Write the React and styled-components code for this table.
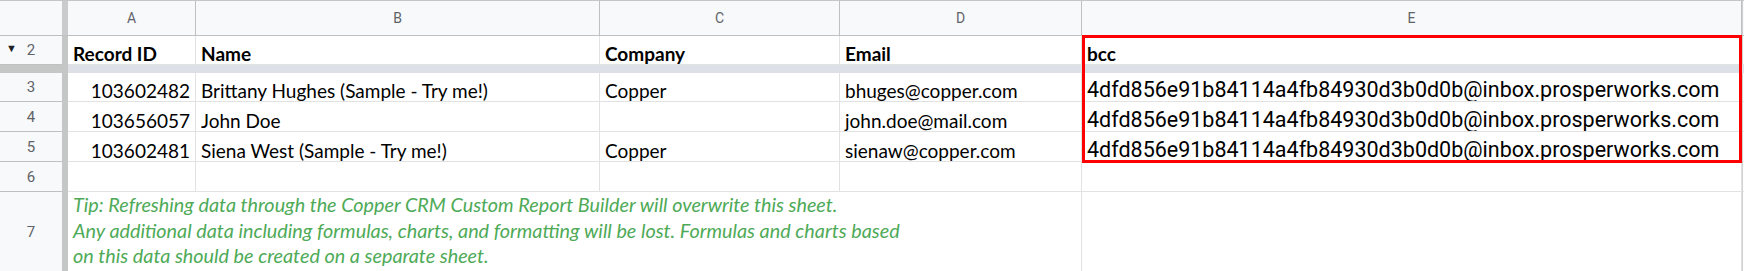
import styled, { createGlobalStyle } from "styled-components";

const COLUMNS = "62px 6px 128px 404px 240px 242px 660px 2px";

const columns = ["A", "B", "C", "D", "E"];

const records = [
  {
    row: 3,
    id: "103602482",
    name: "Brittany Hughes (Sample - Try me!)",
    company: "Copper",
    email: "bhuges@copper.com",
    bcc: "4dfd856e91b84114a4fb84930d3b0d0b@inbox.prosperworks.com",
  },
  {
    row: 4,
    id: "103656057",
    name: "John Doe",
    company: "",
    email: "john.doe@mail.com",
    bcc: "4dfd856e91b84114a4fb84930d3b0d0b@inbox.prosperworks.com",
  },
  {
    row: 5,
    id: "103602481",
    name: "Siena West (Sample - Try me!)",
    company: "Copper",
    email: "sienaw@copper.com",
    bcc: "4dfd856e91b84114a4fb84930d3b0d0b@inbox.prosperworks.com",
  },
];

const GlobalStyle = createGlobalStyle`
  html, body {
    margin: 0;
    padding: 0;
    background: #ffffff;
  }
  body {
    font-family: Lato, "Open Sans", sans-serif;
  }
`;

const DataRow = ({ item }) => {
  return (
    <Row height={item.row === 3 ? 29 : 30}>
      <RowNumber>{item.row}</RowNumber>
      <FreezeBar />
      <Cell align="right">{item.id}</Cell>
      <Cell>{item.name}</Cell>
      <Cell>{item.company}</Cell>
      <Cell>{item.email}</Cell>
      <Cell mono>{item.bcc}</Cell>
      <EdgeCell />
    </Row>
  );
};

export default function App() {
  return (
    <>
      <GlobalStyle />
      <Sheet>
        <Row height={35}>
          <Corner />
          <FreezeBar header />
          {columns.map((c) => (
            <ColumnHeader key={c}>{c}</ColumnHeader>
          ))}
          <EdgeCell header />
        </Row>

        <Row height={29}>
          <RowNumber>
            <Collapse>▼</Collapse>2
          </RowNumber>
          <FreezeBar />
          <Cell bold>Record ID</Cell>
          <Cell bold>Name</Cell>
          <Cell bold>Company</Cell>
          <Cell bold>Email</Cell>
          <Cell bold>bcc</Cell>
          <EdgeCell />
        </Row>

        <FrozenRow>
          <FrozenHead />
          <FrozenHead />
          <FrozenLine />
        </FrozenRow>

        {records.map((item) => (
          <DataRow key={item.row} item={item} />
        ))}

        <Row height={30}>
          <RowNumber>6</RowNumber>
          <FreezeBar />
          <Cell />
          <Cell />
          <Cell />
          <Cell />
          <Cell />
          <EdgeCell />
        </Row>

        <Row height={77}>
          <RowNumber>7</RowNumber>
          <FreezeBar />
          <TipCell>
            Tip: Refreshing data through the Copper CRM Custom Report Builder will overwrite this sheet.
            <br />
            Any additional data including formulas, charts, and formatting will be lost. Formulas and charts based
            <br />
            on this data should be created on a separate sheet.
          </TipCell>
          <Cell />
          <EdgeCell />
        </Row>

        <Selection />
      </Sheet>
    </>
  );
}

const Sheet = styled.div`
  position: relative;
  width: 1744px;
  height: 271px;
  overflow: hidden;
  background: #ffffff;
  border-top: 1px solid #c4c7c5;
  box-sizing: border-box;
`;

const Row = styled.div`
  display: grid;
  grid-template-columns: ${COLUMNS};
  height: ${(p) => p.height}px;
`;

const Corner = styled.div`
  background: #f8f9fa;
  border-bottom: 1px solid #c0c0c0;
`;

const FreezeBar = styled.div`
  background: ${(p) => (p.header ? "#c9cbcd" : "#c4c7c5")};
  border-bottom: ${(p) => (p.header ? "1px solid #c0c0c0" : "none")};
`;

const ColumnHeader = styled.div`
  display: flex;
  align-items: center;
  justify-content: center;
  background: #f8f9fa;
  border-right: 1px solid #c0c0c0;
  border-bottom: 1px solid #c0c0c0;
  font-family: Roboto, "Liberation Sans", sans-serif;
  font-size: 14px;
  color: #5f6368;
`;

const EdgeCell = styled.div`
  background: ${(p) => (p.header ? "#f8f9fa" : "#ffffff")};
  border-left: 1px solid #d0d0d0;
  border-bottom: 1px solid ${(p) => (p.header ? "#c0c0c0" : "#e2e2e2")};
`;

const RowNumber = styled.div`
  position: relative;
  display: flex;
  align-items: center;
  justify-content: center;
  background: #f8f9fa;
  border-bottom: 1px solid #c0c0c0;
  font-family: Roboto, "Liberation Sans", sans-serif;
  font-size: 15px;
  color: #5f6368;
`;

const Collapse = styled.span`
  position: absolute;
  left: 6px;
  top: 6px;
  font-size: 11px;
  color: #202124;
`;

const Cell = styled.div`
  display: flex;
  align-items: flex-end;
  justify-content: ${(p) => (p.align === "right" ? "flex-end" : "flex-start")};
  padding: 0 5px 0 5px;
  border-right: 1px solid #e2e2e2;
  border-bottom: 1px solid #e2e2e2;
  box-sizing: border-box;
  overflow: hidden;
  white-space: nowrap;
  font-family: ${(p) => (p.mono ? "Roboto, \"Liberation Sans\", sans-serif" : "Lato, \"Open Sans\", sans-serif")};
  font-weight: ${(p) => (p.bold ? 700 : 400)};
  font-size: ${(p) => (p.mono ? "21.5px" : "19px")};
  line-height: ${(p) => (p.mono ? "22px" : "20px")};
  color: #000000;
`;

const FrozenRow = styled.div`
  display: grid;
  grid-template-columns: 62px 6px 1fr;
  height: 8px;
`;

const FrozenHead = styled.div`
  background: #c4c7c5;
`;

const FrozenLine = styled.div`
  background: #dde1e7;
`;

const TipCell = styled.div`
  grid-column: span 4;
  display: flex;
  align-items: center;
  padding: 0 5px 2px 5px;
  border-right: 1px solid #e2e2e2;
  border-bottom: 3px solid #e2e2e2;
  font-family: Lato, "Open Sans", sans-serif;
  font-style: italic;
  font-size: 19.8px;
  line-height: 25.5px;
  color: #4eaa57;
  white-space: nowrap;
`;

const Selection = styled.div`
  position: absolute;
  left: 1082px;
  top: 34px;
  width: 660px;
  height: 128px;
  border: 3px solid #ff0000;
  box-sizing: border-box;
  pointer-events: none;
`;
